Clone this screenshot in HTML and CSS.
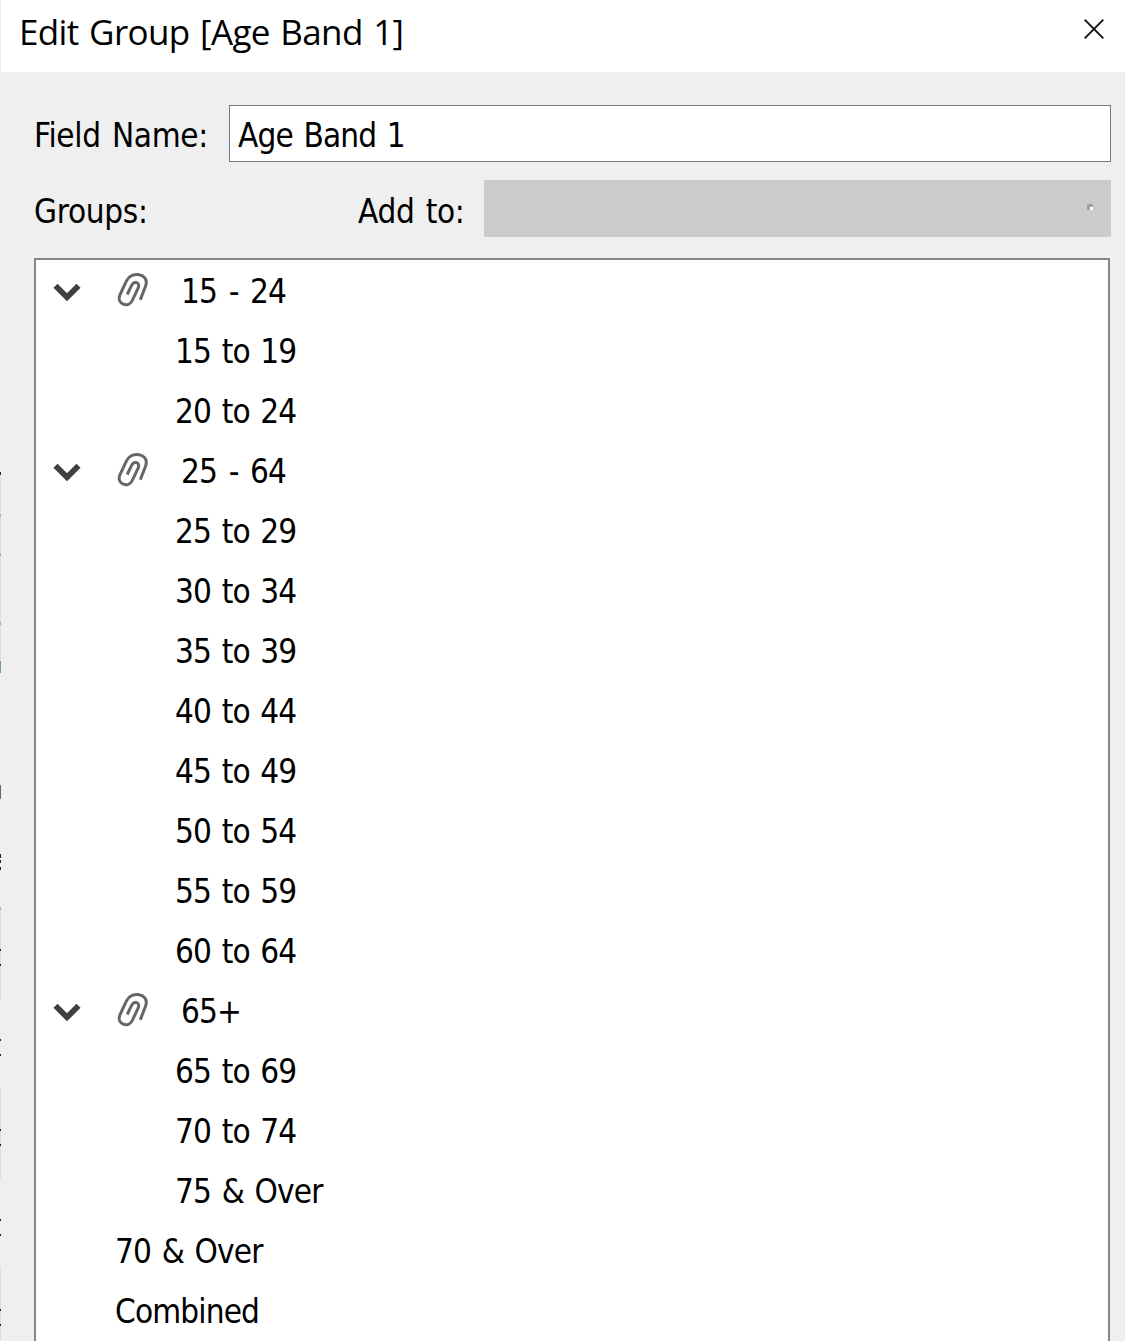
FILE: index.html
```html
<!DOCTYPE html>
<html lang="en">
<head>
<meta charset="utf-8">
<title>Edit Group [Age Band 1]</title>
<link rel="stylesheet" href="styles.css">
</head>
<body>
<svg class="defs" width="0" height="0" aria-hidden="true">
  <symbol id="chevron" viewBox="0 0 28 20"><path d="M2.5 3.8l11.5 11.4 11.500-11.400" fill="none" stroke="#404040" stroke-width="5.8"/></symbol>
  <symbol id="clip" viewBox="0 0 32 36"><path d="M10.200 22.500L14.600 13.400C17.200 8.200 23.400 10.600 21.200 16L15.200 28.600C11.400 36.200-.6 32.400 2.800 23.200L9.600 8.600C14.400-1.400 32.400 1.200 28.800 13.400C27.800 17 25.200 22 23.400 27.800" fill="none" stroke="#666" stroke-width="3"/></symbol>
</svg>
<div class="dialog">
  <header class="titlebar">
    <h1 class="title">Edit Group [Age Band 1]</h1>
    <svg class="close" viewBox="0 0 20 20"><path d="M.7.7l18.6 18.6M19.3.7L.7 19.3" fill="none" stroke="#111" stroke-width="1.9"/></svg>
  </header>
  <main class="content">
    <div class="field">
      <label class="field-label">Field Name:</label>
      <div class="input">Age Band 1</div>
    </div>
    <div class="groups-bar">
      <span class="groups-label">Groups:</span>
      <span class="add-label">Add to:</span>
      <div class="select"><span class="select-mark"></span></div>
    </div>
    <ul class="tree">
      <li class="row group"><svg class="chevron"><use href="#chevron"/></svg><svg class="clip"><use href="#clip"/></svg><span>15 - 24</span></li>
      <li class="row member">15 to 19</li>
      <li class="row member">20 to 24</li>
      <li class="row group"><svg class="chevron"><use href="#chevron"/></svg><svg class="clip"><use href="#clip"/></svg><span>25 - 64</span></li>
      <li class="row member">25 to 29</li>
      <li class="row member">30 to 34</li>
      <li class="row member">35 to 39</li>
      <li class="row member">40 to 44</li>
      <li class="row member">45 to 49</li>
      <li class="row member">50 to 54</li>
      <li class="row member">55 to 59</li>
      <li class="row member">60 to 64</li>
      <li class="row group"><svg class="chevron"><use href="#chevron"/></svg><svg class="clip"><use href="#clip"/></svg><span>65+</span></li>
      <li class="row member">65 to 69</li>
      <li class="row member">70 to 74</li>
      <li class="row member">75 &amp; Over</li>
      <li class="row loose">70 &amp; Over</li>
      <li class="row loose">Combined</li>
    </ul>
  </main>
</div>
<svg class="edge" width="1" height="1341" viewBox="0 0 1 1341" aria-hidden="true">
  <path d="M.5 0V72" stroke="#ececec"/>
  <path d="M.5 476V660M.5 908V999M.5 1087V1179M.5 1266V1341" stroke="#dedede"/>
  <path d="M.5 472v3M.5 854v4M.5 860v3M.5 867v3M.5 949v2M.5 964v2M.5 1039v2M.5 1054v2M.5 1129v2M.5 1144v2M.5 1219v2M.5 1234v2M.5 1309v2M.5 1324v2" stroke="#222"/>
  <path d="M.5 514v3M.5 553v3M.5 622v3M.5 907v3" stroke="#aaa"/>
  <path d="M.5 661v12" stroke="#7895aa"/>
  <path d="M.5 785v14" stroke="#666"/>
</svg>
</body>
</html>
```
FILE: styles.css
```css
* { box-sizing: border-box; }
body {
  position: relative;
  margin: 0;
  height: 1341px;
  overflow: hidden;
  background: #efefef;
  color: #000;
  font-family: "DejaVu Sans Condensed", "DejaVu Sans", sans-serif;
  font-stretch: condensed;
  font-size: 33px;
  letter-spacing: -0.85px;
  word-spacing: 2px;
}
.defs { position: absolute; }
.edge { position: absolute; left: 0; top: 0; }
.dialog { display: flex; flex-direction: column; height: 1341px; }
.titlebar {
  display: flex;
  justify-content: space-between;
  height: 72px;
  flex: none;
  padding: 0 21px 0 19px;
  background: #fff;
}
.title {
  margin: 0;
  font: 400 35px/64px "Open Sans", sans-serif;
  letter-spacing: -0.63px;
}
.close { width: 20px; height: 20px; margin-top: 19px; }
.content { display: flex; flex-direction: column; flex: 1; padding: 33px 14px 0 34px; }
.field { display: flex; height: 57px; line-height: 62px; }
.field-label { width: 195px; letter-spacing: -0.3px; }
.input { flex: 1; border: 1px solid #7a7a7a; background: #fff; padding-left: 8px; line-height: 60px; }
.groups-bar { display: flex; height: 57px; margin-top: 18px; line-height: 64px; letter-spacing: -0.3px; }
.groups-label { width: 324px; }
.add-label { width: 126px; }
.select { flex: 1; display: flex; justify-content: flex-end; padding: 24px 18px 0 0; background: #cbcbcb; }
.select-mark { width: 6px; height: 6px; border: solid #a0a0a0; border-width: 3px 0 0 3px; background: #fff; }
.tree {
  flex: none;
  width: 1076px;
  height: 1100px;
  margin: 21px 0 0;
  padding: 2px 0 0;
  border: 2px solid #85868a;
  background: #fff;
  list-style: none;
}
.row { display: flex; height: 60px; line-height: 60px; white-space: pre; }
.group { padding-left: 17px; word-spacing: 3px; }
.chevron { width: 28px; height: 20px; margin-top: 20px; }
.clip { width: 32px; height: 36px; margin: 10px 32px 0 36px; }
.member { padding-left: 139px; }
.loose { padding-left: 79px; }
```
